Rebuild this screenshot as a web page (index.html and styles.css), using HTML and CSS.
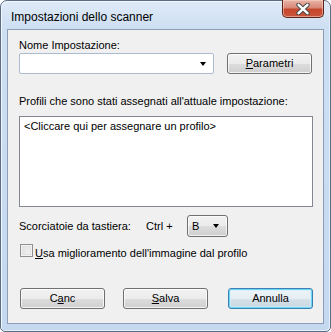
FILE: index.html
```html
<!DOCTYPE html>
<html lang="it">
<head>
  <meta charset="UTF-8" />
  <title>Impostazioni dello scanner</title>
  <link rel="stylesheet" href="styles.css">
</head>
<body>
  <div class="window">
    <div class="titlebar">
      <span class="title">Impostazioni dello scanner</span>
      <div class="close">
        <svg width="16" height="12" viewBox="0 0 16 12">
          <path d="M3.5 1.8 L12.5 10.2 M12.5 1.8 L3.5 10.2" stroke="#4a4a4a" stroke-width="4.4" stroke-linecap="round" fill="none"/>
          <path d="M3.5 1.8 L12.5 10.2 M12.5 1.8 L3.5 10.2" stroke="#ffffff" stroke-width="2.4" stroke-linecap="round" fill="none"/>
        </svg>
      </div>
    </div>

    <div class="client">
      <div class="label first">Nome Impostazione:</div>
      <div class="row name-row">
        <div class="combo edit"><span class="arrow"></span></div>
        <div class="btn"><u>P</u>arametri</div>
      </div>

      <div class="label profiles">Profili che sono stati assegnati all'attuale impostazione:</div>
      <div class="listbox">&lt;Cliccare qui per assegnare un profilo&gt;</div>

      <div class="row shortcut-row">
        <span class="shortcut-label">Scorciatoie da tastiera:</span>
        <span class="ctrl">Ctrl +</span>
        <div class="combo drop"><span class="value">B</span><span class="arrow"></span></div>
      </div>

      <div class="row check-row">
        <span class="checkbox"></span>
        <span class="check-label"><u>U</u>sa miglioramento dell'immagine dal profilo</span>
      </div>

      <div class="row button-row">
        <div class="btn">C<u>a</u>nc</div>
        <div class="btn"><u>S</u>alva</div>
        <div class="btn default">Annulla</div>
      </div>
    </div>
  </div>
</body>
</html>
```

FILE: styles.css
```css
* {
  box-sizing: border-box;
  margin: 0;
  padding: 0;
}

body {
  width: 331px;
  height: 332px;
  background: #ffffff;
  font-family: 'Liberation Sans', Arial, sans-serif;
  font-size: 11px;
  color: #000000;
}

u {
  text-decoration: underline;
  text-underline-offset: 1px;
}

.window {
  width: 331px;
  height: 332px;
  border: 1px solid #5a6d84;
  border-radius: 7px 7px 5px 5px;
  background: linear-gradient(to bottom, #dfeaf7 0px, #cddff3 28px, #c4d8f0 100%);
  box-shadow: inset 1px 1px 0 #f2f7fd, inset -1px -1px 0 #e6eef8;
  display: flex;
  flex-direction: column;
}

/* title bar */
.titlebar {
  height: 28px;
  display: flex;
  justify-content: space-between;
  align-items: flex-start;
}

.title {
  font-size: 12px;
  line-height: 15px;
  padding: 9px 0 0 10px;
  color: #000000;
}

.close {
  width: 42px;
  height: 18px;
  margin: -1px 6px 0 0;
  border: 1px solid #5b2419;
  border-top: none;
  border-radius: 0 0 5px 5px;
  background: linear-gradient(to bottom, #e8b3a6 0%, #d98a78 45%, #c6462c 55%, #c9553b 100%);
  box-shadow: inset 0 0 0 1px rgba(255, 220, 210, 0.5);
  display: flex;
  align-items: center;
  justify-content: center;
}

/* client area */
.client {
  flex: 1;
  margin: 0 6px 7px 6px;
  border: 1px solid #8e9fb5;
  background: #f0f0f0;
  padding: 8px 10px 0 11px;
  display: flex;
  flex-direction: column;
}

.label {
  line-height: 15px;
  height: 15px;
}

.row {
  display: flex;
  align-items: center;
}

.name-row {
  height: 21px;
}

.profiles {
  margin-top: 20px;
}

/* combo boxes */
.combo {
  position: relative;
  height: 21px;
  display: flex;
  align-items: center;
}

.combo .arrow {
  position: absolute;
  right: 7px;
  top: 8px;
  width: 0;
  height: 0;
  border-left: 3.5px solid transparent;
  border-right: 3.5px solid transparent;
  border-top: 4px solid #000000;
}

.combo.edit {
  width: 195px;
  background: #ffffff;
  border: 1px solid #abbcd2;
  border-radius: 2px;
  margin-right: 13px;
}

.combo.drop {
  width: 41px;
  height: 22px;
  border: 1px solid #707070;
  border-radius: 3px;
  background: linear-gradient(to bottom, #f2f2f2 0%, #ebebeb 50%, #dddddd 50%, #cfcfcf 100%);
  box-shadow: inset 0 0 0 1px rgba(255, 255, 255, 0.7);
  padding-left: 4px;
}

.combo.drop .arrow {
  right: 8px;
  top: 8px;
}

/* buttons */
.btn {
  width: 85px;
  height: 21px;
  border: 1px solid #707070;
  border-radius: 3px;
  background: linear-gradient(to bottom, #f2f2f2 0%, #ebebeb 50%, #dddddd 50%, #cfcfcf 100%);
  box-shadow: inset 0 0 0 1px rgba(255, 255, 255, 0.75);
  display: flex;
  align-items: center;
  justify-content: center;
  line-height: 15px;
}

.btn.default {
  border-color: #3c7fb1;
  background: linear-gradient(to bottom, #eef4f8 0%, #e6eef3 50%, #d6e2ea 50%, #c8d6e0 100%);
  box-shadow: inset 0 0 0 1px #6fd6f6, inset 0 0 0 2px rgba(200, 240, 255, 0.6);
}

/* list */
.listbox {
  margin-top: 7px;
  height: 91px;
  border: 1px solid #828790;
  background: #ffffff;
  padding: 2px 0 0 4px;
  line-height: 15px;
}

.shortcut-row {
  margin-top: 8px;
  height: 22px;
}

.shortcut-label {
  width: 127px;
}

.ctrl {
  width: 41px;
}

/* checkbox */
.check-row {
  margin-top: 7px;
  height: 15px;
  align-items: flex-start;
  padding-left: 1px;
}

.checkbox {
  width: 13px;
  height: 13px;
  border: 1px solid #8f8f8f;
  background: linear-gradient(135deg, #dcdcdc 0%, #f7f7f7 100%);
  box-shadow: inset 0 0 0 1px #f4f4f4, inset 0 0 0 2px #e0e0e0;
  margin-right: 2px;
}

.check-label {
  line-height: 15px;
  padding-top: 2px;
}

.button-row {
  margin-top: 29px;
  padding-left: 1px;
  gap: 18px;
}

.button-row .btn + .btn + .btn {
  margin-left: 2px;
}
```
